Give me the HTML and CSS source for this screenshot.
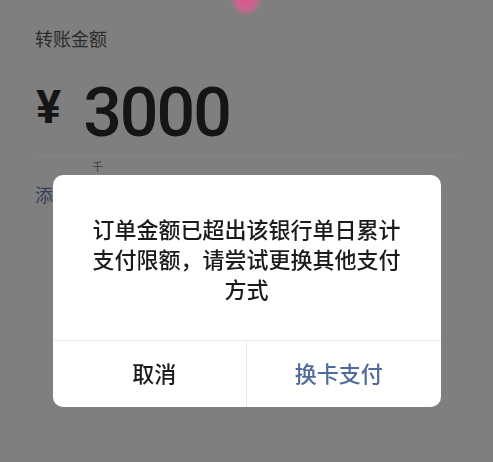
FILE: index.html
```html
<!DOCTYPE html>
<html lang="zh-CN">
<head>
    <meta charset="UTF-8">
    <meta name="viewport" content="width=device-width, initial-scale=1.0">
    <title>转账</title>
    <link rel="stylesheet" href="styles.css">
</head>
<body>
    <div class="glow"></div>
    <div class="transfer">
        <div class="label">转账金额</div>
        <div class="amount">
            <span class="currency">¥</span>
            <span class="value">3000</span>
        </div>
        <div class="divider"></div>
        <div class="unit">千</div>
        <div class="note">添加转账说明</div>
    </div>

    <div class="mask">
        <div class="dialog">
            <p class="dialog-msg">订单金额已超出该银行单日累计支付限额，请尝试更换其他支付方式</p>
            <div class="dialog-actions">
                <button class="btn-cancel">取消</button>
                <button class="btn-ok">换卡支付</button>
            </div>
        </div>
    </div>
</body>
</html>
```

FILE: styles.css
```css
html, body {
    height: 100%;
}
body {
    margin: 0;
    background-color: #7f7f7f;
    font-family: "Noto Sans CJK SC", "Noto Sans", sans-serif;
    overflow: hidden;
}
.glow {
    position: relative;
    height: 0;
}
.glow::before {
    content: "";
    position: absolute;
    left: 230px;
    top: -16px;
    width: 32px;
    height: 32px;
    border-radius: 50%;
    background: radial-gradient(circle, #dc5390 0%, #c8668f 40%, rgba(127, 127, 127, 0) 72%);
}
.transfer {
    padding: 0 33px 0 35px;
}
.label {
    margin-top: 26px;
    font-size: 18px;
    line-height: 24px;
    color: #2b2b2b;
}
.amount {
    display: flex;
    align-items: flex-start;
    margin-top: 29px;
    color: #151515;
}
.currency {
    font-family: Roboto, "Liberation Sans", sans-serif;
    font-weight: 700;
    font-size: 47px;
    line-height: 48px;
    margin-top: 4px;
    margin-left: 1px;
}
.value {
    font-family: Roboto, "Liberation Sans", sans-serif;
    font-weight: 500;
    font-size: 68px;
    line-height: 68px;
    letter-spacing: -2px;
    margin-left: 22px;
}
.divider {
    height: 1px;
    margin-top: 8px;
    background-color: #868686;
}
.unit {
    margin: 3px 0 0 57px;
    font-size: 11px;
    line-height: 14px;
    color: #404040;
}
.note {
    margin-top: 9px;
    font-size: 18px;
    line-height: 24px;
    color: #353f58;
}
.mask {
    position: fixed;
    left: 0;
    top: 0;
    width: 100%;
    height: 100%;
    display: flex;
    justify-content: center;
    align-items: flex-start;
    padding-top: 175px;
    box-sizing: border-box;
}
.dialog {
    width: 388px;
    background-color: #fff;
    border-radius: 10px;
    overflow: hidden;
}
.dialog-msg {
    margin: 0;
    padding: 38px 32px 37px;
    font-size: 22px;
    line-height: 30px;
    font-weight: 500;
    text-align: center;
    color: #1b1b1b;
}
.dialog-actions {
    display: flex;
    border-top: 1px solid #e8e8e8;
}
.dialog-actions button {
    flex: 1;
    height: 66px;
    padding: 0 0 4px;
    border: none;
    background: none;
    font-family: "Noto Sans CJK SC", sans-serif;
    font-size: 22px;
    font-weight: 500;
    cursor: pointer;
}
.dialog-actions .btn-cancel {
    padding-left: 10px;
    color: #1b1b1b;
    border-right: 1px solid #e8e8e8;
}
.dialog-actions .btn-ok {
    padding-right: 10px;
    color: #4f6a9b;
}
```
